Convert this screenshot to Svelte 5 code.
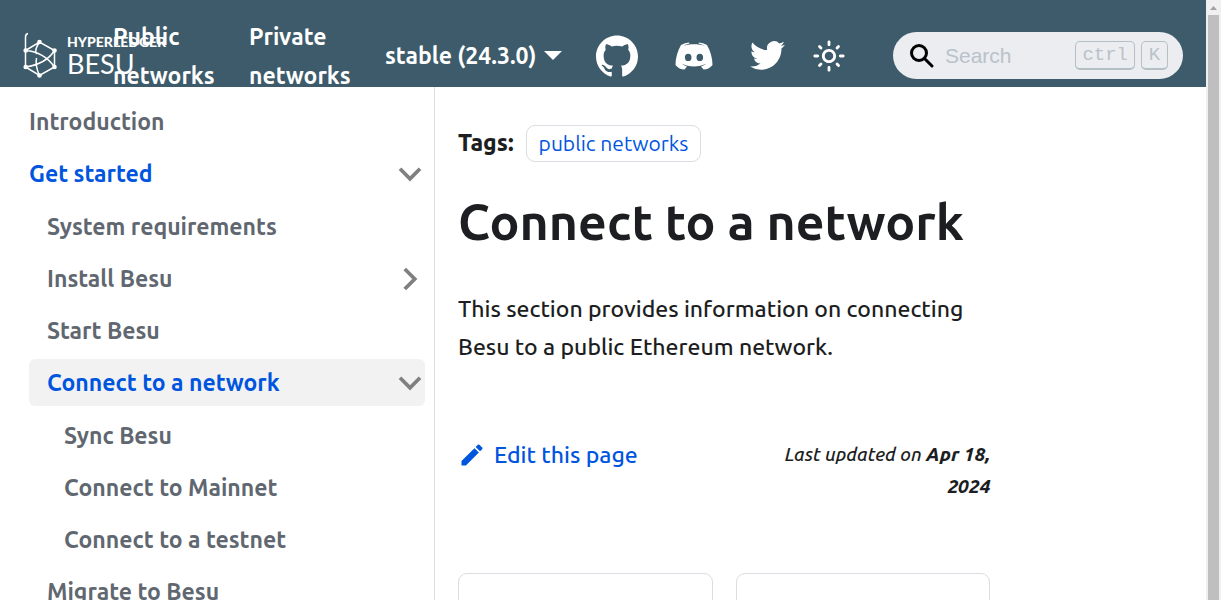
<script>
  const sections = [
    { label: 'Introduction' },
    {
      label: 'Get started', open: true, active: true,
      children: [
        { label: 'System requirements' },
        { label: 'Install Besu', open: false },
        { label: 'Start Besu' },
        {
          label: 'Connect to a network', open: true, active: true, current: true,
          children: [
            { label: 'Sync Besu' },
            { label: 'Connect to Mainnet' },
            { label: 'Connect to a testnet' }
          ]
        },
        { label: 'Migrate to Besu' }
      ]
    }
  ];
</script>

{#snippet menu(items)}
  <ul class="menu">
    {#each items as item}
      <li>
        <div class="entry" class:current={item.current}>
          <a href="#top" class:active={item.active}>{item.label}</a>
          {#if item.open !== undefined}
            <button class="toggle" aria-label={item.label} aria-expanded={item.open}>
              <svg class:closed={!item.open} width="30" height="30" viewBox="0 0 24 24"><path d="M4 7.800l8 8 8-8" fill="none" stroke="#808080" stroke-width="3" /></svg>
            </button>
          {/if}
        </div>
        {#if item.children}{@render menu(item.children)}{/if}
      </li>
    {/each}
  </ul>
{/snippet}

<div class="window" id="top">
  <div class="page">
    <header>
      <a class="brand" href="#top">
        <svg width="34" height="46" viewBox="0 0 34 46" fill="none" stroke="#fff" stroke-width="1.5">
          <path d="M5 1.500Q2.500 2 2.500 5V35L16.500 43.500 31.500 35V18.500L16.500 10 2.500 18.500M2.500 18.500Q21 20 31.500 35M31.500 18.500Q23 32 2.500 35M16.500 10Q11 18 13.500 22M13.500 26Q12 34 16.500 43.500" />
          <g fill="#fff" stroke="none"><circle cx="16.500" cy="10" r="2.300" /><circle cx="2.700" cy="18.500" r="2.300" /><circle cx="31.500" cy="18.500" r="2.300" /><circle cx="2.700" cy="35" r="2.300" /><circle cx="31.500" cy="35" r="2.300" /><circle cx="16.500" cy="43.500" r="2.300" /></g>
        </svg>
        <span class="brand-text"><b>HYPERLEDGER</b><span>BESU</span></span>
      </a>
      <nav>
        <a class="wrap" href="#top">Public networks</a>
        <a class="wrap" href="#top">Private networks</a>
        <a class="version" href="#top">stable (24.3.0)</a>
      </nav>
      <div class="social">
        <a href="#top" aria-label="GitHub"><svg width="42" height="42" viewBox="0 0 24 24" fill="#fff"><path d="M12 .297c-6.63 0-12 5.373-12 12 0 5.303 3.438 9.8 8.205 11.385.6.113.82-.258.82-.577 0-.285-.01-1.04-.015-2.04-3.338.724-4.042-1.61-4.042-1.61C4.422 18.07 3.633 17.7 3.633 17.7c-1.087-.744.084-.729.084-.729 1.205.084 1.838 1.236 1.838 1.236 1.07 1.835 2.809 1.305 3.495.998.108-.776.417-1.305.76-1.605-2.665-.3-5.466-1.332-5.466-5.93 0-1.31.465-2.38 1.235-3.22-.135-.303-.54-1.523.105-3.176 0 0 1.005-.322 3.3 1.23.96-.267 1.98-.399 3-.405 1.02.006 2.04.138 3 .405 2.28-1.552 3.285-1.23 3.285-1.23.645 1.653.24 2.873.12 3.176.765.84 1.23 1.91 1.23 3.22 0 4.61-2.805 5.625-5.475 5.92.42.36.81 1.096.81 2.22 0 1.606-.015 2.896-.015 3.286 0 .315.21.69.825.57C20.565 22.092 24 17.592 24 12.297c0-6.627-5.373-12-12-12" /></svg></a>
        <a href="#top" aria-label="Discord"><svg width="38" height="28" viewBox="0 0 38 28" fill="#fff"><path d="M6 3Q10 .7 14 .5L14.500 1.500Q10 2.500 8 4C14 1.600 24 1.600 30 4Q28 2.500 23.500 1.500L24 .5Q28 .7 32 3C35.500 9 37.500 16 37.500 23 35 26 32 27.500 28.500 27.500L26 24.500Q29 23.500 31.500 21.500C24 25.500 14 25.500 6.500 21.500Q9 23.500 12 24.500L9.500 27.500C6 27.500 3 26 .5 23 .5 16 2.500 9 6 3ZM13.200 11.700a3.300 3.700 0 1 0 0 7.400 3.300 3.700 0 1 0 0-7.400ZM24.800 11.700a3.300 3.700 0 1 0 0 7.400 3.300 3.700 0 1 0 0-7.400Z" fill-rule="evenodd" /></svg></a>
        <a href="#top" aria-label="Twitter"><svg width="35" height="35" viewBox="0 0 24 24" fill="#fff"><path d="M23.953 4.57a10 10 0 01-2.825.775 4.958 4.958 0 002.163-2.723c-.951.555-2.005.959-3.127 1.184a4.92 4.92 0 00-8.384 4.482C7.69 8.095 4.067 6.13 1.64 3.162a4.822 4.822 0 00-.666 2.475c0 1.71.87 3.213 2.188 4.096a4.904 4.904 0 01-2.228-.616v.06a4.923 4.923 0 003.946 4.827 4.996 4.996 0 01-2.212.085 4.936 4.936 0 004.604 3.417 9.867 9.867 0 01-6.102 2.105c-.39 0-.779-.023-1.17-.067a13.995 13.995 0 007.557 2.209c9.053 0 13.998-7.496 13.998-13.985 0-.21 0-.42-.015-.63A9.935 9.935 0 0024 4.59z" /></svg></a>
        <button aria-label="Switch theme"><svg width="34" height="34" viewBox="0 0 24 24" fill="#fff"><path d="M12 9c1.650 0 3 1.350 3 3s-1.350 3-3 3-3-1.350-3-3 1.350-3 3-3m0-2c-2.760 0-5 2.240-5 5s2.240 5 5 5 5-2.240 5-5-2.240-5-5-5zM2 13h2c.55 0 1-.45 1-1s-.45-1-1-1H2c-.55 0-1 .45-1 1s.45 1 1 1zm18 0h2c.55 0 1-.45 1-1s-.45-1-1-1h-2c-.55 0-1 .45-1 1s.45 1 1 1zM11 2v2c0 .55.45 1 1 1s1-.45 1-1V2c0-.55-.45-1-1-1s-1 .45-1 1zm0 18v2c0 .55.45 1 1 1s1-.45 1-1v-2c0-.55-.45-1-1-1s-1 .45-1 1zM5.990 4.580a.996.996 0 0 0-1.410 1.410l1.060 1.060a.996.996 0 1 0 1.410-1.410L5.990 4.580zm12.370 12.370a.996.996 0 0 0-1.410 1.410l1.060 1.060a.996.996 0 1 0 1.410-1.410l-1.060-1.060zm1.060-10.960a.996.996 0 1 0-1.410-1.410l-1.060 1.060a.996.996 0 1 0 1.410 1.410l1.060-1.060zM7.050 18.360a.996.996 0 1 0-1.410-1.410l-1.060 1.060a.996.996 0 1 0 1.410 1.410l1.060-1.060z" /></svg></button>
      </div>
      <label class="search">
        <svg width="24" height="24" viewBox="0 0 24 24" fill="none" stroke="#000" stroke-width="3"><circle cx="9" cy="9" r="7.500" /><path d="M14.500 14.500l7.500 7.500" stroke-linecap="round" /></svg>
        <input type="search" placeholder="Search" aria-label="Search" />
        <kbd>ctrl</kbd><kbd>K</kbd>
      </label>
    </header>
    <div class="body">
      <aside>{@render menu(sections)}</aside>
      <main>
        <article>
          <div class="tags"><b>Tags:</b><a href="#top">public networks</a></div>
          <h1>Connect to a network</h1>
          <p>This section provides information on connecting Besu to a public Ethereum network.</p>
          <footer>
            <a class="edit" href="#top"><svg width="28" height="28" viewBox="0 0 40 40" fill="#0055df"><path d="m34.500 11.700-3 3.100-6.300-6.300 3.100-3q.5-.5 1.200-.5t1.100.5l3.900 3.900q.5.4.5 1.100t-.5 1.200zM5 28.700 23.500 10.200l6.300 6.300L11.300 35H5v-6.300z" /></svg>Edit this page</a>
            <span class="updated">Last updated on <b>Apr 18, 2024</b></span>
          </footer>
          <div class="cards"><div class="card"></div><div class="card"></div></div>
        </article>
      </main>
    </div>
  </div>
  <div class="scrollbar"><svg width="15" height="14" viewBox="0 0 15 14"><path d="M4 10h7L7.500 6z" fill="#a3a3a3" /></svg><div class="thumb"></div></div>
</div>

<style>
  :global(body) { margin: 0; }
  .window { display: flex; height: 100vh; overflow: hidden; background: #fff; color: #1c1e21; font: 500 23px/38px Ubuntu, "Noto Sans", sans-serif; }
  a { color: inherit; text-decoration: none; }
  b { font-weight: 800; }
  button { padding: 0; border: 0; background: none; display: flex; }
  svg { display: block; flex: none; }
  .page { flex: 1; min-width: 0; display: flex; flex-direction: column; }
  header { height: 63px; padding: 24px 23px 0; flex: none; display: flex; align-items: center; background: #3d5b6a; color: #fff; }
  .brand { width: 78px; display: flex; gap: 10px; flex: none; }
  .brand-text { display: flex; flex-direction: column; padding-top: 3px; font-family: Lato, sans-serif; }
  .brand-text b { font-size: 14px; line-height: 14px; font-weight: 900; }
  .brand-text span { font-size: 27px; line-height: 30px; font-weight: 400; }
  nav { display: flex; align-items: center; font-weight: 600; line-height: 39px; padding-left: 12px; }
  .wrap { width: 100px; margin-right: 36px; }
  .version { display: flex; align-items: center; gap: 8px; white-space: nowrap; }
  .version::after { content: ""; border: 9px solid transparent; border-top-color: #fff; border-bottom: 0; }
  .social { display: flex; align-items: center; margin-left: auto; gap: 37px; }
  .social button { margin-left: -10px; }
  .search { width: 258px; height: 47px; margin-left: 47px; padding: 0 15px 0 17px; border-radius: 24px; background: #ebedf0; display: flex; align-items: center; gap: 6px; flex: none; }
  .search input { flex: 1; min-width: 0; border: 0; outline: 0; background: none; padding: 0 0 0 5px; font: 21px "Liberation Sans", sans-serif; }
  .search input::placeholder { color: #b9c2ca; }
  kbd { height: 26px; min-width: 13px; padding: 0 6px; text-align: center; border: 1px solid #b4c0c6; border-bottom-width: 2px; border-radius: 5px; color: #b9c2ca; font: 19px/26px "Liberation Mono", monospace; }
  .body { flex: 1; min-height: 0; display: flex; overflow: hidden; }
  aside { width: 36%; min-width: 435px; box-sizing: border-box; padding: 11px 9px 0 29px; border-right: 1px solid #dadde1; flex: none; font-weight: 600; color: #606770; }
  .menu { list-style: none; margin: 0; padding: 0; }
  .menu .menu { padding-top: 1px; }
  .menu .menu .entry { padding-left: 18px; }
  .menu .menu .menu .entry { padding-left: 35px; }
  .entry { height: 47px; margin-bottom: 5px; border-radius: 6px; display: flex; align-items: center; justify-content: space-between; }
  .current { background: #f2f2f2; }
  .active { color: #0055df; }
  .closed { transform: rotate(-90deg); }
  main { flex: 1; min-width: 0; display: grid; grid-template-columns: 3fr 1fr; }
  article { padding: 37px 23px 0; display: flex; flex-direction: column; }
  .tags { display: flex; align-items: center; gap: 12px; }
  .tags a { border: 1px solid #dadde1; border-radius: 9px; padding: 0 12px; font-size: 21px; font-weight: 400; line-height: 35px; color: #0055df; }
  h1 { margin: 28px 0 0; font-size: 50px; line-height: 62px; font-weight: 700; white-space: nowrap; }
  p { margin: 38px 0 0; }
  footer { display: flex; justify-content: space-between; margin-top: 70px; }
  .edit { display: flex; align-items: center; gap: 8px; height: 38px; color: #0055df; }
  .updated { width: 210px; padding-top: 2px; text-align: right; font-size: 19px; line-height: 32px; font-style: italic; }
  .cards { display: grid; grid-template-columns: 1fr 1fr; gap: 23px; margin-top: 71px; }
  .card { height: 100px; border: 1px solid #dadde1; border-radius: 9px; }
  .scrollbar { width: 15px; background: #f0f0f0; display: flex; flex-direction: column; }
  .thumb { flex: 1; margin: 1px 2px 0; background: #bfbfbf; }
</style>
